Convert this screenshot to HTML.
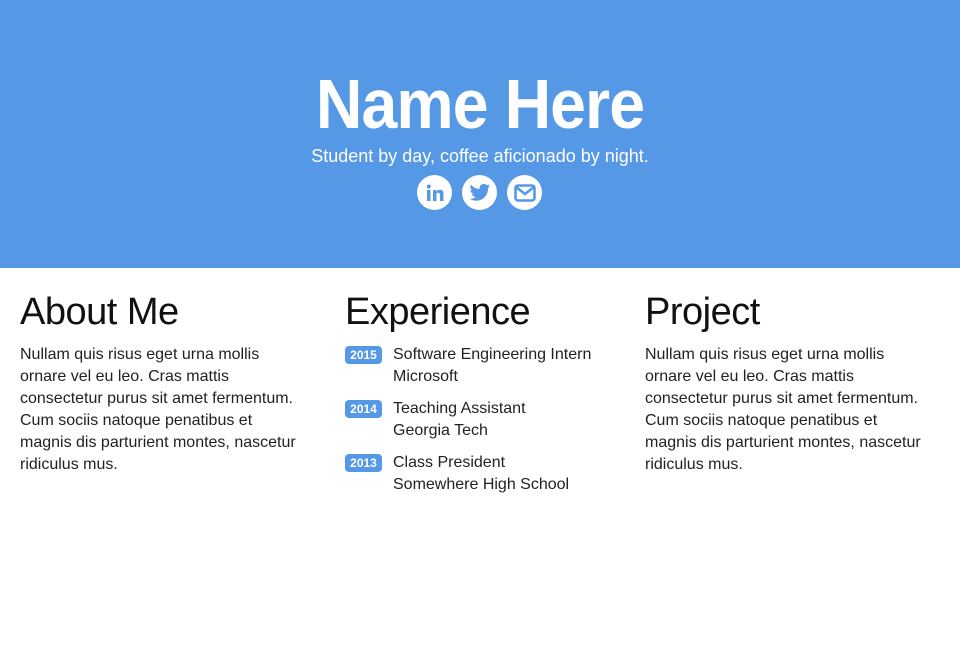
<!DOCTYPE html>
<html><head><style>
body{margin:0;width:960px;height:670px;background:#fff;font-family:"Liberation Sans",sans-serif;color:#222;overflow:hidden}
.hero{background:#5599e6;height:268px;position:relative;text-align:center;color:#fff}
.hero h1{margin:0;position:absolute;top:64px;left:0;width:960px;font-size:70px;font-weight:900;letter-spacing:-1px;line-height:80px;transform:scaleX(0.92)}
.hero p{position:absolute;top:145px;left:0;width:960px;margin:0;font-size:18px;line-height:22px}
.icons{position:absolute;top:175px;left:417px;display:flex;gap:10px}
.ic{width:35px;height:35px;border-radius:50%;background:#fff;display:flex;align-items:center;justify-content:center}
.col{position:absolute;top:290px}
h2{margin:0;font-weight:normal;font-size:38px;line-height:44px;letter-spacing:-0.5px;color:#111}
.t{font-size:16px;line-height:22px;margin-top:10px;white-space:nowrap}
.item{display:flex;margin-bottom:10px}
.b{background:#5599e6;color:#fff;font-weight:bold;font-size:12px;border-radius:4px;width:37px;height:18px;line-height:18px;text-align:center;margin-top:2px;margin-right:11px}
</style></head><body>
<div class="hero">
<h1>Name Here</h1>
<p>Student by day, coffee aficionado by night.</p>
<div class="icons">
<div class="ic"><svg width="20" height="20" viewBox="0 0 20 20"><rect x="2" y="7" width="3.5" height="11" fill="#5599e6"/><circle cx="3.8" cy="3.5" r="2" fill="#5599e6"/><path d="M8 7h3.3v1.6c.6-1 1.8-1.9 3.6-1.9 3 0 3.6 2 3.6 4.5V18H15v-5.6c0-1.3-.2-2.6-1.7-2.6s-1.900 1.1-1.900 2.5V18H8z" fill="#5599e6"/></svg></div>
<div class="ic"><svg width="22" height="20" viewBox="0 0 24 20"><path d="M23 2.3c-.8.4-1.700.6-2.600.7.900-.6 1.600-1.400 2-2.500-.900.500-1.900.900-2.900 1.100C18.600.7 17.400.1 16.100.1c-2.500 0-4.600 2.100-4.600 4.600 0 .4 0 .7.1 1C7.800 5.500 4.400 3.700 2.100.9c-.4.700-.6 1.500-.6 2.300 0 1.600.8 3 2.100 3.800-.8 0-1.500-.2-2.100-.6v.1c0 2.200 1.600 4.100 3.700 4.500-.4.1-.8.2-1.200.2-.3 0-.6 0-.9-.1.600 1.800 2.300 3.200 4.300 3.200-1.600 1.200-3.600 2-5.700 2H.6c2 1.300 4.500 2.100 7.100 2.100 8.500 0 13.100-7 13.100-13.100v-.6c.9-.6 1.600-1.400 2.200-2.400z" fill="#5599e6"/></svg></div>
<div class="ic"><svg width="22" height="18" viewBox="0 0 22 18"><rect x="1.5" y="1.5" width="19" height="15" rx="2.5" fill="none" stroke="#5599e6" stroke-width="2.6"/><path d="M2 3l9 7 9-7" fill="none" stroke="#5599e6" stroke-width="2.6"/></svg></div>
</div>
</div>
<div class="col" style="left:20px;width:300px"><h2>About Me</h2><div class="t">Nullam quis risus eget urna mollis<br>ornare vel eu leo. Cras mattis<br>consectetur purus sit amet fermentum.<br>Cum sociis natoque penatibus et<br>magnis dis parturient montes, nascetur<br>ridiculus mus.</div></div>
<div class="col" style="left:345px;width:290px"><h2>Experience</h2><div class="t">
<div class="item"><div class="b">2015</div><div>Software Engineering Intern<br>Microsoft</div></div>
<div class="item"><div class="b">2014</div><div>Teaching Assistant<br>Georgia Tech</div></div>
<div class="item"><div class="b">2013</div><div>Class President<br>Somewhere High School</div></div>
</div></div>
<div class="col" style="left:645px;width:300px"><h2>Project</h2><div class="t">Nullam quis risus eget urna mollis<br>ornare vel eu leo. Cras mattis<br>consectetur purus sit amet fermentum.<br>Cum sociis natoque penatibus et<br>magnis dis parturient montes, nascetur<br>ridiculus mus.</div></div>
</body></html>
